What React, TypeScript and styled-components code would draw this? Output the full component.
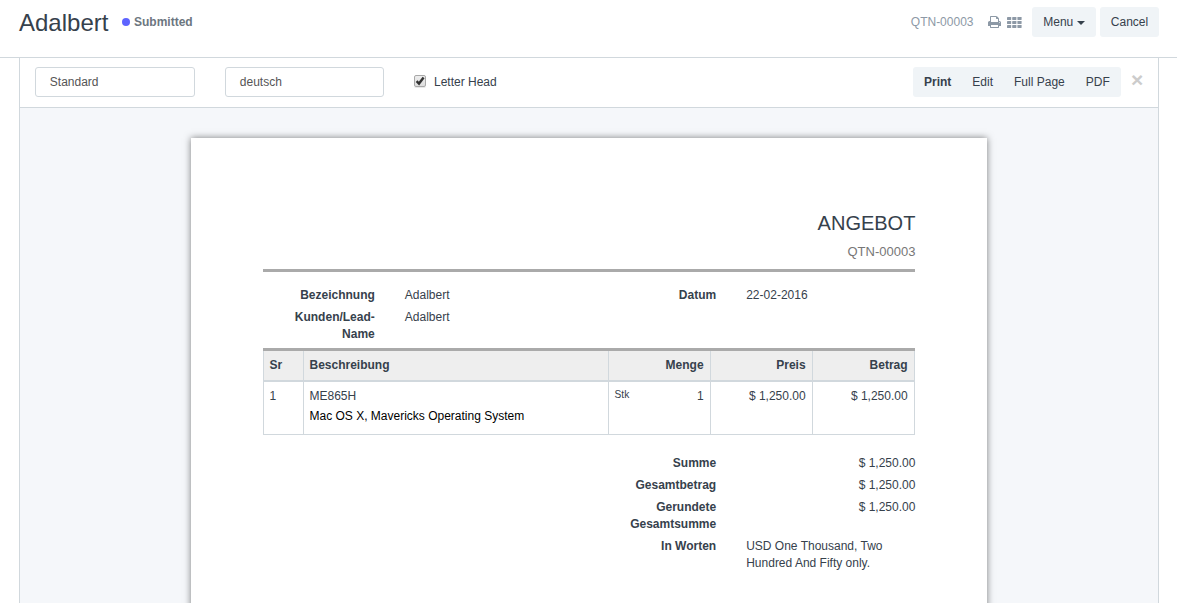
import React from "react";
import styled, { createGlobalStyle } from "styled-components";

const line = "#d1d8dd";

const GlobalStyle = createGlobalStyle`
  * { box-sizing: border-box; }
  body {
    margin: 0;
    background: #fff;
    color: #36414c;
    font: 12px/17px "Liberation Sans", Arial, sans-serif;
    overflow: hidden;
  }
`;

const Screen = styled.div`
  height: 603px;
  overflow: hidden;
  display: flex;
  flex-direction: column;
`;

const Header = styled.header`
  flex: none;
  height: 58px;
  padding: 7px 18px 0 19px;
  border-bottom: 1px solid ${line};
  display: flex;
  align-items: flex-start;
`;

const Title = styled.h1`
  margin: 0;
  font-size: 24px;
  font-weight: 400;
  line-height: 31px;
`;

const Status = styled.span`
  display: flex;
  align-items: center;
  gap: 3.6px;
  height: 30px;
  margin-left: 14px;
  font-weight: 700;
  color: #6c7680;

  &::before {
    content: "";
    width: 8px;
    height: 8px;
    border-radius: 50%;
    background: #5e64ff;
  }
`;

const Actions = styled.div`
  display: flex;
  align-items: center;
  height: 30px;
  margin-left: auto;
  color: #8d99a6;

  svg { display: block; }
`;

const DocId = styled.span`
  margin-right: 14px;
`;

const IconSlot = styled.span<{ $after: number }>`
  margin-right: ${(p) => p.$after}px;
`;

const Button = styled.button<{ $width: number; $gap?: number }>`
  display: flex;
  align-items: center;
  justify-content: center;
  gap: 3.5px;
  width: ${(p) => p.$width}px;
  height: 30px;
  padding: 0;
  margin-left: ${(p) => p.$gap ?? 0}px;
  border: 0;
  border-radius: 3px;
  background: #f0f4f7;
  color: #36414c;
  font: inherit;
`;

const Caret = styled.span`
  margin-top: 2px;
  border: 4px solid transparent;
  border-top-color: currentColor;
  border-bottom: 0;
`;

const Frame = styled.main`
  flex: 1;
  min-height: 0;
  width: 1140px;
  margin-left: 19px;
  border: solid ${line};
  border-width: 0 1px;
  display: flex;
  flex-direction: column;
`;

const Toolbar = styled.div`
  flex: none;
  height: 50px;
  padding: 9px 15px 0 15px;
  border-bottom: 1px solid ${line};
  display: flex;
`;

const Field = styled.div<{ $width: number }>`
  width: ${(p) => p.$width}px;
  height: 30px;
  margin-right: 30px;
  padding: 0 13.8px;
  border: 1px solid ${line};
  border-radius: 3px;
  line-height: 29px;
  color: #555;
`;

const CheckLabel = styled.label`
  display: flex;
  height: 30px;
  line-height: 30px;
`;

const CheckBox = styled.span`
  width: 12px;
  height: 12px;
  margin: 8px 8px 0 0;
  border: 1px solid #a8a8a8;
  border-radius: 2px;
  background: linear-gradient(#ededed, #dedede);
  box-shadow: 0 1px 0 #e8e8e8;

  svg { display: block; }
`;

const Modes = styled.div`
  display: flex;
  margin-left: auto;
  width: 208px;
  height: 30px;
  padding-left: 11px;
  gap: 21px;
  border-radius: 3px;
  background: #f0f4f7;
  line-height: 30px;
  white-space: nowrap;
`;

const Close = styled.span`
  width: 12px;
  margin-left: 10px;
  font-size: 21px;
  font-weight: 700;
  line-height: 26px;
  color: #ccc;
`;

const Canvas = styled.div`
  flex: 1;
  min-height: 0;
  padding: 30px 0 0 171px;
  background: #f5f7fa;
  overflow: hidden;
`;

const Sheet = styled.article`
  width: 796px;
  height: 1000px;
  padding: 72px;
  background: #fff;
  box-shadow: 0 0 7px rgba(0, 0, 0, 0.5);
`;

const SheetHead = styled.div`
  height: 62px;
  text-align: right;
  border-bottom: 3px solid #aaa;
`;

const DocType = styled.h2`
  margin: 0 -0.4px 0 0;
  font-size: 20px;
  font-weight: 400;
  line-height: 26px;
`;

const DocNumber = styled.div`
  margin: 7px -0.4px 0 0;
  font-size: 13px;
  line-height: 18px;
  color: #777;
`;

const Columns = styled.div<{ $top: number; $height?: number }>`
  display: grid;
  grid-template-columns: 1fr 1fr;
  align-items: start;
  margin-right: -0.4px;
  padding-top: ${(p) => p.$top}px;
  height: ${(p) => (p.$height ? `${p.$height}px` : "auto")};
`;

const Column = styled.div<{ $start?: number }>`
  grid-column-start: ${(p) => p.$start ?? "auto"};
  display: flex;
  flex-direction: column;
  gap: 5px;
`;

const Pair = styled.div<{ $indent: number }>`
  display: grid;
  grid-template-columns: ${(p) => 111.8 + p.$indent}px 1fr;
  column-gap: 30px;
`;

const Label = styled.div`
  font-weight: 700;
  text-align: right;
`;

const Value = styled.div<{ $right?: boolean }>`
  text-align: ${(p) => (p.$right ? "right" : "left")};
`;

const Table = styled.div`
  border-top: 3px solid #aaa;
`;

const Row = styled.div<{ $head?: boolean }>`
  display: grid;
  grid-template-columns: 41px 305px 102px 102px 102px;
  height: ${(p) => (p.$head ? 31 : 53)}px;
  border-bottom: ${(p) => (p.$head ? 2 : 1)}px solid ${line};
  background: ${(p) => (p.$head ? "#eee" : "#fff")};
  font-weight: ${(p) => (p.$head ? 700 : 400)};
`;

const Cell = styled.div<{ $right?: boolean }>`
  padding: 6px 6.4px 0 5.5px;
  border-right: 1px solid ${line};
  text-align: ${(p) => (p.$right ? "right" : "left")};

  &:first-child {
    border-left: 1px solid ${line};
  }
`;

const Quantity = styled.div`
  display: flex;
  justify-content: space-between;
`;

const Unit = styled.small`
  font-size: 10.2px;
  line-height: 14px;
`;

const Description = styled.div`
  margin-top: 3px;
  color: #000;
`;

const PrintIcon = () => (
  <svg width="13" height="14" viewBox="0 0 1664 1792" fill="currentColor">
    <path d="M384 1536h896v-256h-896v256zM384 896h896v-384h-160q-40 0-68-28t-28-68v-160h-640v640zM1536 960q0-26-19-45t-45-19-45 19-19 45 19 45 45 19 45-19 19-45zM1664 960v416q0 13-9.5 22.5t-22.5 9.5h-224v160q0 40-28 68t-68 28h-960q-40 0-68-28t-28-68v-160h-224q-13 0-22.5-9.5t-9.5-22.5v-416q0-79 56.5-135.5t135.5-56.5h64v-544q0-40 28-68t68-28h672q40 0 88 20t76 48l152 152q28 28 48 76t20 88v256h64q79 0 135.5 56.5t56.5 135.5z" />
  </svg>
);

const GridIcon = () => (
  <svg width="15" height="11" viewBox="0 0 15 11" fill="currentColor">
    {[0, 4, 8].map((y) =>
      [0, 5.2, 10.4].map((x) => (
        <rect key={`${x}-${y}`} x={x} y={y} width="4.2" height="3" rx="0.4" />
      ))
    )}
  </svg>
);

const details = [
  ["Bezeichnung", "Adalbert"],
  ["Kunden/Lead-Name", "Adalbert"],
];

const totals = [
  ["Summe", "$ 1,250.00"],
  ["Gesamtbetrag", "$ 1,250.00"],
  ["Gerundete Gesamtsumme", "$ 1,250.00"],
];

export default function App() {
  return (
    <Screen>
      <GlobalStyle />
      <Header>
        <Title>Adalbert</Title>
        <Status>Submitted</Status>
        <Actions>
          <DocId>QTN-00003</DocId>
          <IconSlot $after={6.5}><PrintIcon /></IconSlot>
          <IconSlot $after={10}><GridIcon /></IconSlot>
          <Button $width={64}>Menu<Caret /></Button>
          <Button $width={59} $gap={4}>Cancel</Button>
        </Actions>
      </Header>
      <Frame>
        <Toolbar>
          <Field $width={160}>Standard</Field>
          <Field $width={159}>deutsch</Field>
          <CheckLabel>
            <CheckBox>
              <svg width="10" height="10" viewBox="0 0 10 10" fill="none" stroke="#333" strokeWidth="2.4">
                <path d="M1.6 5.2 4 7.6 8.6 1.6" />
              </svg>
            </CheckBox>
            Letter Head
          </CheckLabel>
          <Modes>
            <b>Print</b>
            <span>Edit</span>
            <span>Full Page</span>
            <span>PDF</span>
          </Modes>
          <Close>×</Close>
        </Toolbar>
        <Canvas>
          <Sheet>
            <SheetHead>
              <DocType>ANGEBOT</DocType>
              <DocNumber>QTN-00003</DocNumber>
            </SheetHead>
            <Columns $top={15} $height={76}>
              <Column>
                {details.map(([label, value]) => (
                  <Pair key={label} $indent={0}>
                    <Label>{label}</Label>
                    <Value>{value}</Value>
                  </Pair>
                ))}
              </Column>
              <Column>
                <Pair $indent={15.2}>
                  <Label>Datum</Label>
                  <Value>22-02-2016</Value>
                </Pair>
              </Column>
            </Columns>
            <Table>
              <Row $head>
                <Cell>Sr</Cell>
                <Cell>Beschreibung</Cell>
                <Cell $right>Menge</Cell>
                <Cell $right>Preis</Cell>
                <Cell $right>Betrag</Cell>
              </Row>
              <Row>
                <Cell>1</Cell>
                <Cell>
                  ME865H
                  <Description>Mac OS X, Mavericks Operating System</Description>
                </Cell>
                <Cell>
                  <Quantity><Unit>Stk</Unit><span>1</span></Quantity>
                </Cell>
                <Cell $right>$ 1,250.00</Cell>
                <Cell $right>$ 1,250.00</Cell>
              </Row>
            </Table>
            <Columns $top={20}>
              <Column $start={2}>
                {totals.map(([label, value]) => (
                  <Pair key={label} $indent={15.2}>
                    <Label>{label}</Label>
                    <Value $right>{value}</Value>
                  </Pair>
                ))}
                <Pair $indent={15.2}>
                  <Label>In Worten</Label>
                  <Value>USD One Thousand, Two Hundred And Fifty only.</Value>
                </Pair>
              </Column>
            </Columns>
          </Sheet>
        </Canvas>
      </Frame>
    </Screen>
  );
}
